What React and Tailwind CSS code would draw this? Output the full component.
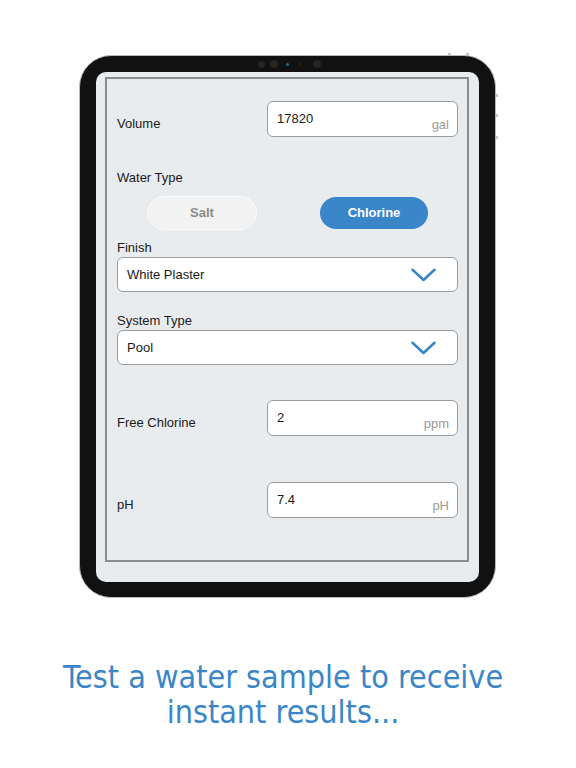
import React from "react";

const ui = { fontFamily: '"Liberation Sans", Arial, sans-serif' };

function Chevron() {
  return (
    <svg width="25" height="14" viewBox="0 0 25 14" fill="none">
      <path d="M1.5 1.8 L12.5 12 L23.5 1.8" stroke="#3a86c8" strokeWidth="2.6" strokeLinecap="round" strokeLinejoin="round" />
    </svg>
  );
}

function NumInput({ value, unit }) {
  return (
    <div className="flex h-[36px] w-[191px] justify-between rounded-[6px] border border-[#9c9c9c] bg-white pl-[9px] pr-[8px] pt-[9px] pb-[3px]">
      <span className="self-start text-[13px] leading-[16px] text-[#1a1a1a]">{value}</span>
      <span className="self-end text-[13px] leading-[16px] text-[#9a9a9a]">{unit}</span>
    </div>
  );
}

function InputRow({ label, value, unit, className }) {
  return (
    <div className={"flex items-start justify-between " + className}>
      <span className="pt-[15px] text-[13px] leading-[16px] text-[#1a1a1a]">{label}</span>
      <NumInput value={value} unit={unit} />
    </div>
  );
}

function Select({ value }) {
  return (
    <div className="flex h-[35px] items-center justify-between rounded-[6px] border border-[#9c9c9c] bg-white pl-[9px] pr-[21px]">
      <span className="text-[13px] leading-[16px] text-[#1a1a1a]">{value}</span>
      <Chevron />
    </div>
  );
}

export default function App() {
  return (
    <div className="min-h-[768px] w-[576px] bg-white pt-[55px]" style={ui}>
      <div className="relative ml-[79px] h-[543px] w-[417px] rounded-[32px] border border-[#b9b9b9] bg-[#111111] pl-[16px] pr-[16px] pt-[16px] pb-[15px]">
        {/* side buttons */}
        <div className="absolute right-[-3px] top-[38px] h-[3px] w-[2px] bg-[#c4c4c4]" />
        <div className="absolute right-[-3px] top-[58px] h-[3px] w-[2px] bg-[#c4c4c4]" />
        <div className="absolute right-[-3px] top-[80px] h-[3px] w-[2px] bg-[#c4c4c4]" />
        <div className="absolute right-[44px] top-[-3px] h-[2px] w-[3px] bg-[#c4c4c4]" />
        <div className="absolute right-[26px] top-[-3px] h-[2px] w-[3px] bg-[#c4c4c4]" />
        {/* camera */}
        <div className="absolute left-[178px] top-[4px] flex items-center gap-[5px]">
          <div className="h-[7px] w-[7px] rounded-full bg-[#262626]" />
          <div className="h-[8px] w-[8px] rounded-full bg-[#262626]" />
          <div className="ml-[3px] h-[3px] w-[3px] rounded-full bg-[#2b6b8f]" />
          <div className="ml-[5px] h-[2px] w-[2px] rounded-full bg-[#2a2a2a]" />
          <div className="ml-[7px] h-[8px] w-[8px] rounded-full bg-[#262626]" />
        </div>
        <div className="h-full w-full rounded-[10px] bg-[#e9ecef] pl-[9px] pr-[10px] pt-[5px] pb-[20px]">
          <div className="h-full w-full border-2 border-[#8c8c8c] pl-[10px] pr-[9px] pt-[22px]">
            <InputRow label="Volume" value="17820" unit="gal" />
            <div className="mt-[33px] text-[13px] leading-[16px] text-[#1a1a1a]">Water Type</div>
            <div className="mt-[10px] flex items-center justify-between px-[30px]">
              <div className="flex h-[34px] w-[110px] items-center justify-center rounded-full border border-[#fbfbfb] bg-[#f2f2f2] text-[13px] font-bold text-[#8c8c8c]">
                Salt
              </div>
              <div className="flex h-[32px] w-[108px] items-center justify-center rounded-full bg-[#3a86c8] text-[13px] font-bold text-white">
                Chlorine
              </div>
            </div>
            <div className="mt-[10px] text-[13px] leading-[16px] text-[#1a1a1a]">Finish</div>
            <div className="mt-[1px]">
              <Select value="White Plaster" />
            </div>
            <div className="mt-[21px] text-[13px] leading-[16px] text-[#1a1a1a]">System Type</div>
            <div className="mt-[1px]">
              <Select value="Pool" />
            </div>
            <InputRow className="mt-[35px]" label="Free Chlorine" value="2" unit="ppm" />
            <InputRow className="mt-[46px]" label="pH" value="7.4" unit="pH" />
          </div>
        </div>
      </div>
      <div
        className="mt-[62px] pr-[10px] text-center text-[32px] leading-[35px] text-[#3a86c8]"
        style={{ fontFamily: '"DejaVu Sans Condensed", "DejaVu Sans", sans-serif' }}
      >
        Test a water sample to receive
        <br />
        instant results...
      </div>
    </div>
  );
}
